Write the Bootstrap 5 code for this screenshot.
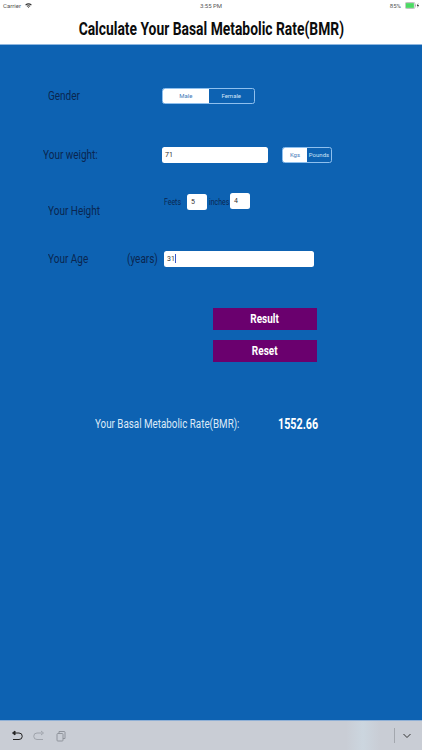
<!DOCTYPE html>
<html lang="en"><head><meta charset="utf-8"><title>BMR</title>
<link href="https://cdn.jsdelivr.net/npm/bootstrap@5.3.0/dist/css/bootstrap.min.css" rel="stylesheet">
<style>
html,body{height:100%;overflow:hidden}
body{font-family:Roboto,"Liberation Sans",sans-serif;background:#0d62b2;color:#0b2a55}
.shell{width:422px;height:750px}
.sq{display:inline-block;transform:scaleX(.77);transform-origin:0 50%;white-space:nowrap}
.statusbar{height:11px;background:#fff;font-size:6px;color:#555;line-height:12px;padding:0 3px}
.titlebar{height:34px;background:#fff;border-bottom:1px solid #8fb7e0;color:#0c0c0c;font-size:18px;font-weight:700;line-height:35px;text-align:center;white-space:nowrap}
.titlebar .sq{transform-origin:50% 50%}
.stage{flex:1 1 auto;min-height:0}
.lbl{font-size:13.500px;color:#0a2650;line-height:15px;white-space:nowrap}
.lbl .sq{transform:scaleX(.74)}
.rowa{height:16px;margin-top:43px;padding-left:48px}
.rowb{height:16px;margin-top:43px;padding-left:43px}
.rowc{height:34px;margin-top:30px;padding-left:48px}
.rowd{height:16px;margin-top:24px;padding-left:48px}
.w114{width:114px}.w119{width:119px}.w79{width:79px}.w37{width:37px}
.seg{height:16px;border:1px solid #8fc0ee;border-radius:2.500px;overflow:hidden;font-size:6px;line-height:14px;text-align:center}
.seg span{display:block;height:100%;width:50%}
.seg .on{background:#fff;color:#3f78b8}
.seg .off{color:#cfe2f7}
.seg-g{width:93px}
.seg-w{width:50px;margin-left:14px}
.fld{height:16px;background:#fff;border-radius:2.500px;font-size:7px;line-height:16px;color:#333;padding-left:3px;border:0}
.fld-w{width:106px}
.fld-a{width:150px}
.fld-n{width:20px;padding-left:4px}
.caret{display:inline-block;width:1px;height:9px;background:#3a57c8;vertical-align:-2px}
.htl{margin-top:10px}
.htg{padding-left:116px;width:100%}
.sm{font-size:9px;color:#0a2650;line-height:16px;margin-top:1px}
.feet{width:23px;padding-left:0}
.inch{width:23px;padding-left:2px}
.dn{margin-top:1px}
.action{width:104px;height:22px;background:#6a006e;color:#fff;font-size:13px;font-weight:700;line-height:22px;text-align:center;border-radius:0;padding:0;border:0}
.action .sq{transform-origin:50% 50%}
.actions{margin-top:41px;padding-left:213px;gap:9.500px}
.bmr{margin-top:54px;padding-left:95px;line-height:16px;color:#dbe9f8;font-size:13px;white-space:nowrap}
.bmrl{width:183px}
.bmrl .sq{transform:scaleX(.755)}
.val{color:#fff;font-weight:700;font-size:14px}
.tools{height:30px;background:linear-gradient(90deg,#c9cdd5 82%,#ccd6df 86%,#c9cdd5 90%);border-top:1px solid #8fb0d6;padding:0 10px}
.tools svg{display:block}
.vr-line{width:1px;height:15px;background:#a3a7ae;margin-right:-1px}
</style></head><body>
<div class="shell d-flex flex-column">
 <div class="statusbar d-flex justify-content-between position-relative">
  <div class="d-flex align-items-center gap-1"><span>Carrier</span>
   <svg width="7" height="5" viewBox="0 0 8 6"><path d="M0 2a6 6 0 0 1 8 0L7 3a4.600 4.600 0 0 0-6 0zM1.700 3.700a3.400 3.400 0 0 1 4.600 0L5.400 4.600a2 2 0 0 0-2.800 0zM3.200 5.200a1.200 1.200 0 0 1 1.600 0L4 6z" fill="#333"/></svg></div>
  <div class="position-absolute top-0 start-50 translate-middle-x">3:55 PM</div>
  <div class="d-flex align-items-center gap-1"><span>85%</span>
   <svg width="14" height="7" viewBox="0 0 14 7"><rect x=".3" y=".5" width="9.600" height="6" rx="1.200" fill="none" stroke="#999" stroke-width=".6"/><rect x=".9" y="1.100" width="8" height="4.800" fill="#4cd964"/><rect x="10.200" y="2.500" width=".7" height="2" fill="#999"/><path d="M13.300 1l-1.500 3h1l-.3 2 1.500-3h-1z" fill="#333"/></svg></div>
 </div>
 <div class="titlebar"><span class="sq">Calculate Your Basal Metabolic Rate(BMR)</span></div>
 <div class="stage d-flex flex-column">
  <div class="rowa d-flex"><div class="lbl w114"><span class="sq">Gender</span></div>
   <div class="seg seg-g d-flex"><span class="on">Male</span><span class="off">Female</span></div></div>
  <div class="rowb d-flex"><div class="lbl w119"><span class="sq">Your weight:</span></div>
   <div class="fld fld-w">71</div>
   <div class="seg seg-w d-flex"><span class="on">Kgs</span><span class="off">Pounds</span></div></div>
  <div class="rowc d-flex position-relative"><div class="lbl position-absolute htl"><span class="sq">Your Height</span></div>
   <div class="htg d-flex align-items-start">
    <div class="sm feet"><span class="sq">Feets</span></div><div class="fld fld-n dn">5</div><div class="sm inch"><span class="sq">inches</span></div><div class="fld fld-n">4</div></div></div>
  <div class="rowd d-flex"><div class="lbl w79"><span class="sq">Your Age</span></div><div class="lbl w37"><span class="sq">(years)</span></div>
   <div class="fld fld-a">31<span class="caret"></span></div></div>
  <div class="actions d-flex flex-column">
   <button class="action btn" type="button"><span class="sq">Result</span></button>
   <button class="action btn" type="button"><span class="sq">Reset</span></button></div>
  <div class="bmr d-flex"><div class="bmrl"><span class="sq">Your Basal Metabolic Rate(BMR):</span></div><span class="val"><span class="sq">1552.66</span></span></div>
 </div>
 <div class="tools d-flex align-items-center gap-2">
  <svg width="14" height="14" viewBox="0 0 14 14" fill="none" stroke="#222" stroke-width="1"><path d="M4 4h5a3.200 3.200 0 0 1 0 6.500H3"/><path d="M5 2 2.500 4 5 6z" fill="#222"/></svg>
  <svg width="14" height="14" viewBox="0 0 14 14" fill="none" stroke="#9a9ea6" stroke-width=".9"><path d="M10 4H5a3.200 3.200 0 0 0 0 6.500h6"/><path d="M9 2l2.500 2L9 6"/></svg>
  <svg width="14" height="14" viewBox="0 0 14 14" fill="none" stroke="#8a8e96" stroke-width=".9"><rect x="3" y="4.500" width="6" height="7.500" rx=".8"/><path d="M5 4.500V2.500h5.500a.8.800 0 0 1 .5.5v6.500H9"/></svg>
  <div class="ms-auto vr-line"></div>
  <svg width="10" height="8" viewBox="0 0 10 8" fill="none" stroke="#333" stroke-width="1"><path d="M1.500 2 5 5.500 8.500 2"/></svg>
 </div>
</div>
<script src="https://cdn.jsdelivr.net/npm/bootstrap@5.3.0/dist/js/bootstrap.bundle.min.js"></script>
</body></html>
